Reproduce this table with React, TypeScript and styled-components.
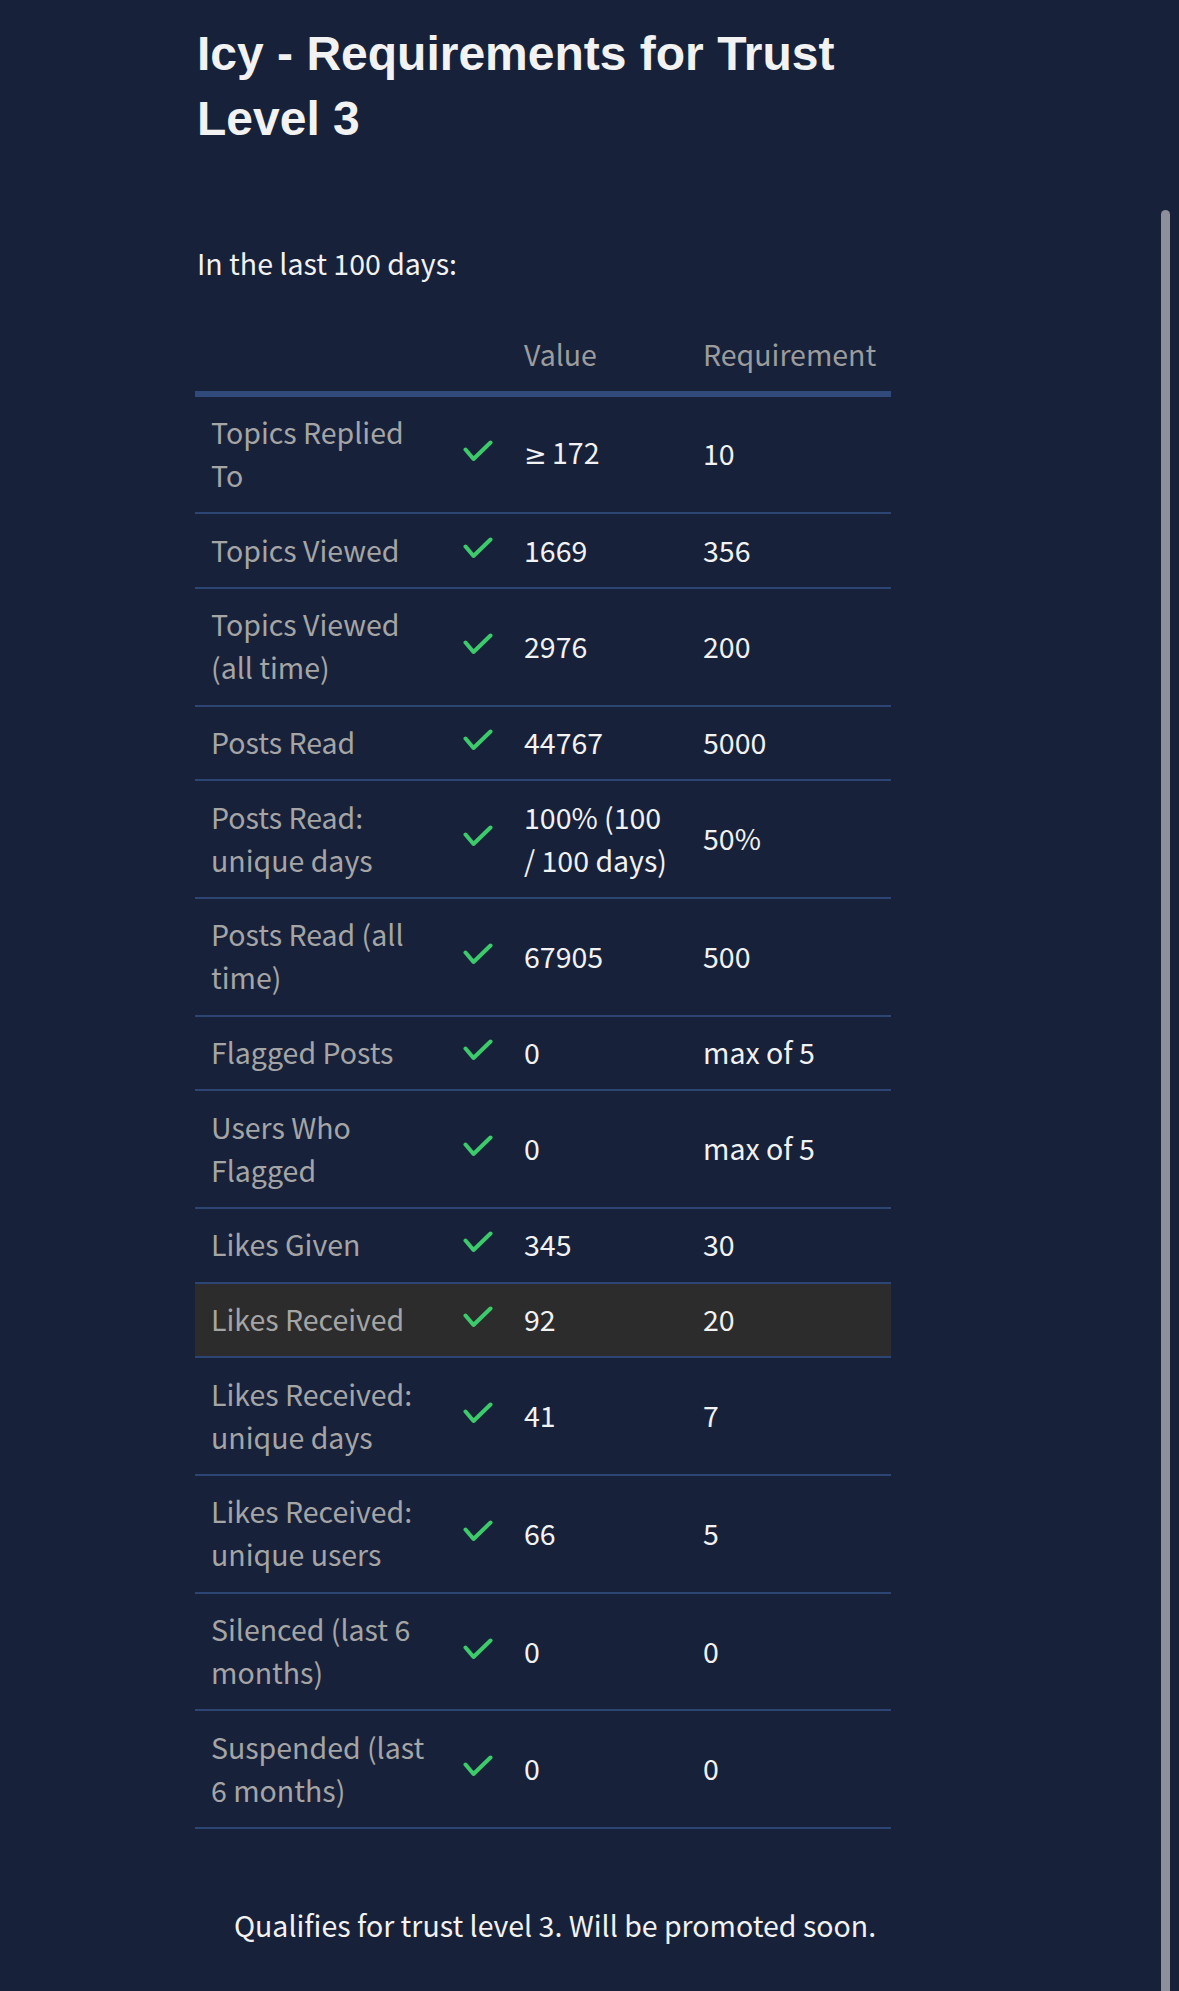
import { createGlobalStyle } from "styled-components";
import styled from "styled-components";

type Requirement = {
  label: string;
  value: string;
  required: string;
  highlighted?: boolean;
};

const requirements: Requirement[] = [
  { label: "Topics Replied To", value: "≥ 172", required: "10" },
  { label: "Topics Viewed", value: "1669", required: "356" },
  { label: "Topics Viewed (all time)", value: "2976", required: "200" },
  { label: "Posts Read", value: "44767", required: "5000" },
  { label: "Posts Read: unique days", value: "100% (100 / 100 days)", required: "50%" },
  { label: "Posts Read (all time)", value: "67905", required: "500" },
  { label: "Flagged Posts", value: "0", required: "max of 5" },
  { label: "Users Who Flagged", value: "0", required: "max of 5" },
  { label: "Likes Given", value: "345", required: "30" },
  { label: "Likes Received", value: "92", required: "20", highlighted: true },
  { label: "Likes Received: unique days", value: "41", required: "7" },
  { label: "Likes Received: unique users", value: "66", required: "5" },
  { label: "Silenced (last 6 months)", value: "0", required: "0" },
  { label: "Suspended (last 6 months)", value: "0", required: "0" },
];

const CheckIcon = () => (
  <svg width="30" height="22" viewBox="0 0 30 22" fill="none">
    <polyline
      points="2.5,9.5 10.5,19 27.5,2.5"
      stroke="#3bcb6b"
      strokeWidth="4"
      strokeLinecap="round"
      strokeLinejoin="round"
    />
  </svg>
);

// the CJK font draws ≥ slanted, so that glyph comes from a latin face
const renderValue = (value: string) =>
  value.startsWith("≥") ? (
    <>
      <Symbol>≥</Symbol>
      {value.slice(1)}
    </>
  ) : (
    value
  );

export default function App() {
  return (
    <>
      <GlobalStyle />
      <Page>
        <Content>
          <Title>Icy - Requirements for Trust Level 3</Title>
          <Intro>In the last 100 days:</Intro>
          <Table>
            <colgroup>
              <col style={{ width: 252 }} />
              <col style={{ width: 61 }} />
              <col style={{ width: 179 }} />
              <col style={{ width: 204 }} />
            </colgroup>
            <thead>
              <HeadRow>
                <HeadCell />
                <HeadCell />
                <HeadCell>Value</HeadCell>
                <HeadCell>Requirement</HeadCell>
              </HeadRow>
            </thead>
            <tbody>
              {requirements.map((r) => (
                <Row key={r.label} $highlighted={r.highlighted}>
                  <LabelCell>{r.label}</LabelCell>
                  <CheckCell>
                    <CheckIcon />
                  </CheckCell>
                  <ValueCell>{renderValue(r.value)}</ValueCell>
                  <ValueCell>{r.required}</ValueCell>
                </Row>
              ))}
            </tbody>
          </Table>
          <Summary>Qualifies for trust level 3. Will be promoted soon.</Summary>
        </Content>
        <ScrollThumb />
      </Page>
    </>
  );
}

const GlobalStyle = createGlobalStyle`
  html, body {
    margin: 0;
    padding: 0;
    background: #18213a;
  }
  body {
    font-family: "Noto Sans CJK SC", "Noto Sans", sans-serif;
    color: #f2f2f2;
  }
`;

const Page = styled.div`
  position: relative;
  min-height: 1991px;
  padding: 21px 0 0 195px;
  box-sizing: border-box;
  overflow: hidden;
`;

const Content = styled.main`
  width: 720px;
  display: flex;
  flex-direction: column;
`;

const Title = styled.h1`
  margin: 0;
  font-family: "Liberation Sans", Arial, sans-serif;
  font-weight: 700;
  font-size: 48px;
  line-height: 65px;
  color: #f2f2f2;
  padding-left: 2px;
`;

const Intro = styled.p`
  margin: 90px 0 34px 2px;
  font-size: 28.5px;
  line-height: 43px;
  color: #f2f2f2;
`;

const Table = styled.table`
  width: 696px;
  table-layout: fixed;
  border-collapse: collapse;
  font-size: 28.5px;
  line-height: 43px;
`;

const HeadRow = styled.tr`
  border-bottom: 6px solid #2f4a7b;
`;

const HeadCell = styled.th`
  padding: 13.5px 16px 16px;
  text-align: left;
  font-weight: 400;
  color: #9c9c9c;
`;

const Row = styled.tr<{ $highlighted?: boolean }>`
  border-bottom: 2px solid #2d4572;
  background: ${(p) => (p.$highlighted ? "#2c2c2c" : "transparent")};
`;

const LabelCell = styled.td`
  padding: 13.4px 16px 16.3px;
  vertical-align: middle;
  color: #a5a5a5;
`;

const CheckCell = styled.td`
  padding: 14.85px 0 14.85px 16px;
  vertical-align: middle;

  svg {
    display: block;
    margin-top: -6px;
  }
`;

const ValueCell = styled.td`
  padding: 13.4px 16px 16.3px;
  vertical-align: middle;
  color: #f2f2f2;
`;

const Symbol = styled.span`
  font-family: "Noto Sans", "DejaVu Sans", sans-serif;
  font-size: 27px;
  margin-right: -1px;
`;

const Summary = styled.p`
  margin: 74px 0 0;
  text-align: center;
  font-size: 28.5px;
  line-height: 43px;
  color: #f2f2f2;
`;

const ScrollThumb = styled.div`
  position: absolute;
  top: 210px;
  right: 9px;
  bottom: 0;
  width: 9px;
  border-radius: 5px 5px 0 0;
  background: #8d909b;
`;
